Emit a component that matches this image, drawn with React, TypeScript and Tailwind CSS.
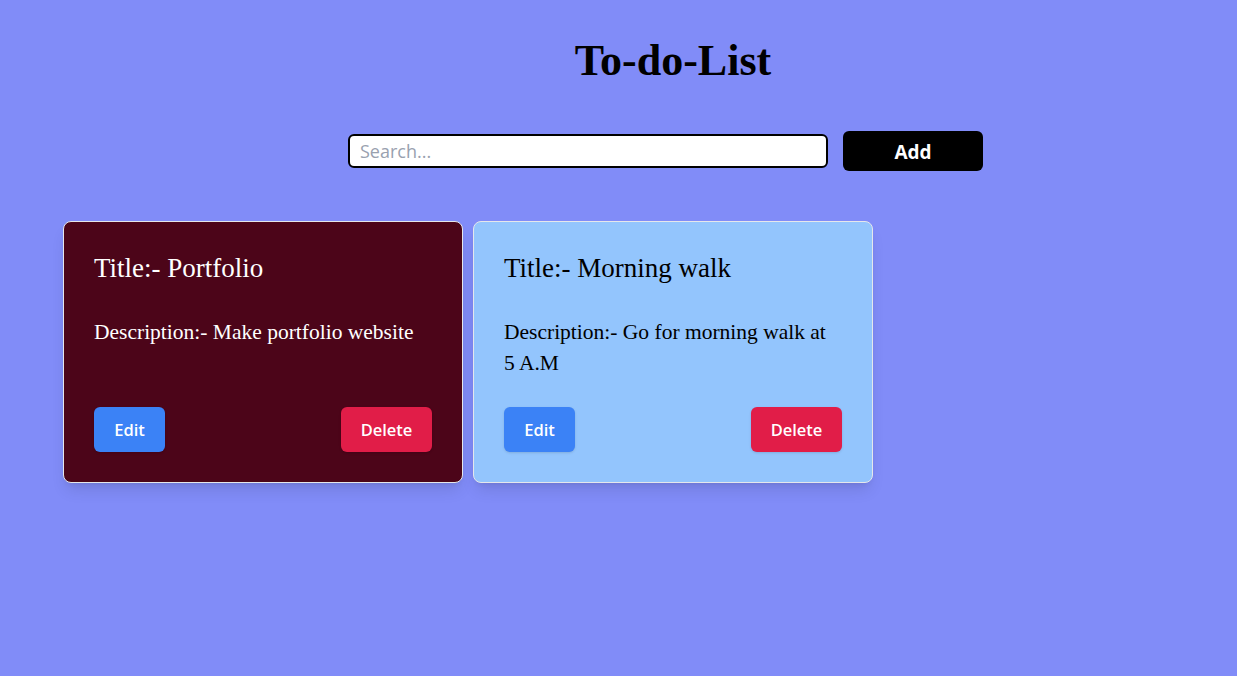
import React from "react";

function Card({ title, desc, bg, fg }: { title: string; desc: string; bg: string; fg: string }) {
  return (
    <div className={`w-[400px] flex flex-col rounded-lg border border-gray-200 shadow-lg p-[30px] ${bg} ${fg}`}>
      <h2 className="text-[27px] leading-8 font-['Liberation_Serif',serif]">{title}</h2>
      <p className="mt-[33px] max-w-[330px] text-[21.5px] leading-[31px] font-['Liberation_Serif',serif]">{desc}</p>
      <div className="mt-auto pt-[28px] flex justify-between font-['Open_Sans',sans-serif]">
        <button className="w-[71px] h-[45px] pt-[2px] rounded-md bg-[#3b82f6] text-white text-[16.5px] font-semibold shadow-sm">Edit</button>
        <button className="w-[91px] h-[45px] pt-[2px] rounded-md bg-[#e11d48] text-white text-[16.5px] font-semibold shadow-sm">Delete</button>
      </div>
    </div>
  );
}

export default function App() {
  return (
    <div className="min-h-[676px] w-full bg-[#818cf8]">
      <div className="pl-[109px] pt-[36px] text-center">
        <h1 className="text-[44px] leading-[50px] font-bold text-black font-['Liberation_Serif',serif]">To-do-List</h1>
      </div>
      <div className="pl-[109px] mt-[45px] flex justify-center items-center">
        <input
          placeholder="Search..."
          className="w-[480px] h-[34px] bg-white border-2 border-black rounded-md px-[10px] text-[18px] placeholder:text-gray-400 font-['Open_Sans',sans-serif] outline-none"
        />
        <button className="mx-[15px] w-[140px] h-[40px] pt-[2px] rounded-md bg-black text-white text-[19px] font-bold font-['Open_Sans',sans-serif]">
          Add
        </button>
      </div>
      <div className="mt-[50px] pl-[63px] flex gap-[10px] items-stretch">
        <Card title="Title:- Portfolio" desc="Description:- Make portfolio website" bg="bg-[#4c0519]" fg="text-white" />
        <Card title="Title:- Morning walk" desc="Description:- Go for morning walk at 5 A.M" bg="bg-[#93c5fd]" fg="text-black" />
      </div>
    </div>
  );
}
